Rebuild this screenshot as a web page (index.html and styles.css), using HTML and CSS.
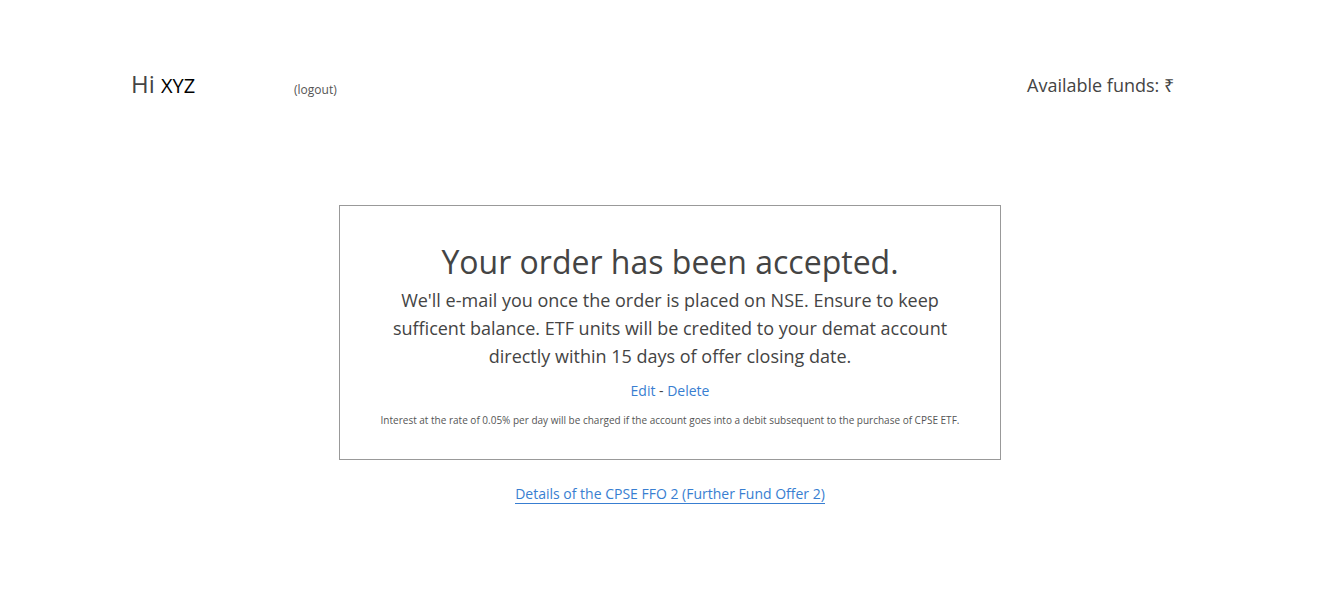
FILE: index.html
```html
<!DOCTYPE html>
<html lang="en">

<head>
  <meta charset="UTF-8" />
  <meta name="viewport" content="width=device-width, initial-scale=1.0" />
  <title>CPSE ETF - Order accepted</title>
  <link rel="stylesheet" href="styles.css">
</head>

<body>
  <div class="header">
    <div class="greeting">
      <span class="hi">Hi <span class="name">XYZ</span></span>
      <a href="#" class="logout">(logout)</a>
    </div>
    <div class="funds">Available funds: &#8377;</div>
  </div>

  <div class="content">
    <div class="order-box">
      <h1>Your order has been accepted.</h1>
      <p class="message">We'll e-mail you once the order is placed on NSE. Ensure to keep sufficent balance. ETF units will be credited to your demat account directly within 15 days of offer closing date.</p>
      <p class="actions"><a href="#">Edit</a> - <a href="#">Delete</a></p>
      <p class="note">Interest at the rate of 0.05% per day will be charged if the account goes into a debit subsequent to the purchase of CPSE ETF.</p>
    </div>
    <a href="#" class="details">Details of the CPSE FFO 2 (Further Fund Offer 2)</a>
  </div>
</body>

</html>
```

FILE: styles.css
```css
body {
  font-family: 'Open Sans', sans-serif;
  margin: 0;
  background: #fff;
  color: #444;
}

a {
  color: #387ed1;
  text-decoration: none;
}

.header {
  display: flex;
  justify-content: space-between;
  align-items: baseline;
  padding: 67px 168px 0 131px;
}

.greeting {
  display: flex;
  align-items: baseline;
}

.hi {
  font-size: 24px;
  width: 163px;
}

.name {
  font-size: 20px;
  color: #000;
}

.logout {
  font-size: 12px;
  color: #555;
  position: relative;
  top: 1px;
}

.funds {
  font-size: 18px;
  position: relative;
  top: -1px;
}

.content {
  display: flex;
  flex-direction: column;
  align-items: center;
  padding-top: 105px;
  margin-left: -2px;
}

.order-box {
  width: 660px;
  border: 1px solid #999;
  text-align: center;
  padding: 33px 0 32px;
  margin-bottom: 25px;
}

h1 {
  font-size: 32px;
  font-weight: 400;
  margin: 0;
  line-height: 46px;
}

.message {
  font-size: 18px;
  line-height: 28px;
  margin: 1px auto 11px;
  width: 570px;
}

.actions {
  font-size: 14px;
  margin: 0 0 12px;
  line-height: 20px;
}

.note {
  font-size: 10px;
  color: #555;
  margin: 0;
  line-height: 14px;
}

.details {
  font-size: 14px;
  line-height: 18px;
  border-bottom: 1px solid #387ed1;
}
```
